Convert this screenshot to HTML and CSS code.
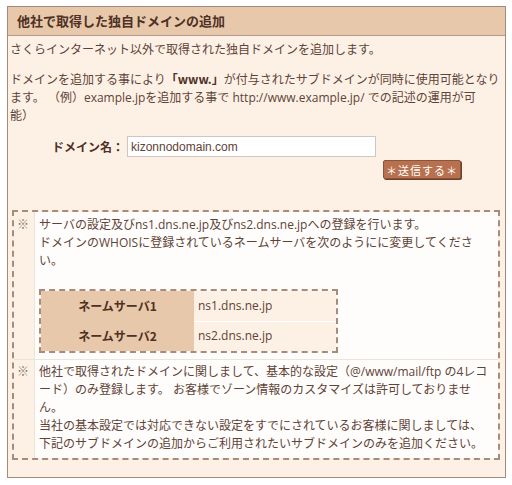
FILE: index.html
```html
<!DOCTYPE html>
<html>
<head>
  <meta charset="utf-8">
  <title>他社で取得した独自ドメインの追加</title>
  <link rel="stylesheet" href="styles.css">
</head>
<body>
  <div class="box">
    <h2 class="box-title">他社で取得した独自ドメインの追加</h2>

    <div class="box-body">
      <p class="lead">さくらインターネット以外で取得された独自ドメインを追加します。</p>
      <p class="lead">ドメインを追加する事により<b>「www.」</b>が付与されたサブドメインが同時に使用可能となります。 （例）example.jpを追加する事で http://www.example.jp/ での記述の運用が可<br>能）</p>

      <form class="domain-form" onsubmit="return false;">
        <div class="field-row">
          <label for="domain">ドメイン名：</label>
          <input type="text" id="domain" value="kizonnodomain.com">
        </div>
        <div class="submit-row">
          <button type="submit" class="send-btn">＊送信する＊</button>
        </div>
      </form>

      <table class="notes">
        <tr>
          <th>※</th>
          <td>
            サーバの設定及びns1.dns.ne.jp及びns2.dns.ne.jpへの登録を行います。<br>
            ドメインのWHOISに登録されているネームサーバを次のようにに変更してください。

            <table class="ns-table">
              <tr>
                <th>ネームサーバ1</th>
                <td>ns1.dns.ne.jp</td>
              </tr>
              <tr>
                <th>ネームサーバ2</th>
                <td>ns2.dns.ne.jp</td>
              </tr>
            </table>
          </td>
        </tr>
        <tr>
          <th>※</th>
          <td>
            他社で取得されたドメインに関しまして、基本的な設定（@/www/mail/ftp の4レコ<br>ード）のみ登録します。 お客様でゾーン情報のカスタマイズは許可しておりませ<br>ん。<br>
            当社の基本設定では対応できない設定をすでにされているお客様に関しましては、<br>
            下記のサブドメインの追加からご利用されたいサブドメインのみを追加ください。
          </td>
        </tr>
      </table>
    </div>
  </div>
</body>
</html>
```

FILE: styles.css
```css
* {
  margin: 0;
  padding: 0;
  box-sizing: border-box;
}

body {
  background-color: #fff;
  font-family: "Open Sans", "Noto Sans CJK JP", sans-serif;
  font-size: 12px;
  line-height: 18px;
  color: #5e4337;
}

.box {
  width: 499px;
  height: 472px;
  margin: 6px 0 0 7px;
  border: 1px solid #a6897a;
  background-color: #fdf1e6;
}

.box-title {
  height: 29px;
  padding-left: 9px;
  background-color: #e7c8aa;
  border-bottom: 1px solid #b8998a;
  font-size: 13px;
  line-height: 28px;
  font-weight: bold;
  color: #4e3024;
}

.box-body {
  padding: 5px 3px 0 2px;
}

.lead {
  margin-bottom: 11px;
}

.lead b {
  font-family: "Noto Sans CJK JP", sans-serif;
  color: #4e3024;
}

/* domain form */
.field-row {
  display: flex;
  align-items: center;
  margin-top: 6px;
  padding-left: 42px;
}

.field-row label {
  flex-shrink: 0;
  width: 75px;
  white-space: nowrap;
  font-family: "Noto Sans CJK JP", sans-serif;
  font-size: 12px;
  font-weight: bold;
  color: #4e3024;
}

.field-row input {
  width: 249px;
  height: 21px;
  padding: 0 3px;
  border: 1px solid #cfc6c0;
  background: #fff;
  font-family: "Liberation Sans", "Noto Sans CJK JP", sans-serif;
  font-size: 12px;
  color: #5e4337;
}

.submit-row {
  padding-left: 373px;
  margin-top: 3px;
}

.send-btn {
  width: 78px;
  height: 19px;
  background-color: #b8714f;
  border: 1px solid #8d5439;
  border-radius: 2px;
  box-shadow: 1px 1px 0 #6b3f2b;
  color: #fff;
  font-family: "Noto Sans CJK JP", sans-serif;
  font-size: 11px;
  line-height: 16px;
  letter-spacing: 1px;
  cursor: pointer;
}

/* notes */
.notes {
  width: 488px;
  margin: 30px 0 0 2px;
  border: 2px dashed #a98b7c;
  border-collapse: separate;
  border-spacing: 0;
}

.notes > tbody > tr > th {
  width: 21px;
  padding: 4px 0 0 3px;
  vertical-align: top;
  text-align: left;
  font-weight: normal;
  color: #8a7468;
  border-right: 1px solid #ece3da;
}

.notes > tbody > tr > td {
  padding: 4px 4px 6px 4px;
  background-color: #fffdfb;
  vertical-align: top;
}

.notes > tbody > tr + tr > th,
.notes > tbody > tr + tr > td {
  border-top: 1px solid #ece3da;
  padding-top: 3px;
}

.notes > tbody > tr + tr > td {
  padding-bottom: 5px;
}

.ns-table {
  width: 299px;
  margin-top: 19px;
  border: 2px dashed #a98b7c;
  border-collapse: separate;
  border-spacing: 0;
}

.ns-table th {
  width: 153px;
  height: 30px;
  background-color: #e7c8aa;
  font-family: "Noto Sans CJK JP", sans-serif;
  font-weight: bold;
  font-size: 12px;
  color: #4e3024;
  text-align: center;
}

.ns-table td {
  height: 30px;
  padding-left: 4px;
  background-color: #fdf1e6;
}

.ns-table tr + tr td {
  border-top: 1px solid #fff;
}
```
